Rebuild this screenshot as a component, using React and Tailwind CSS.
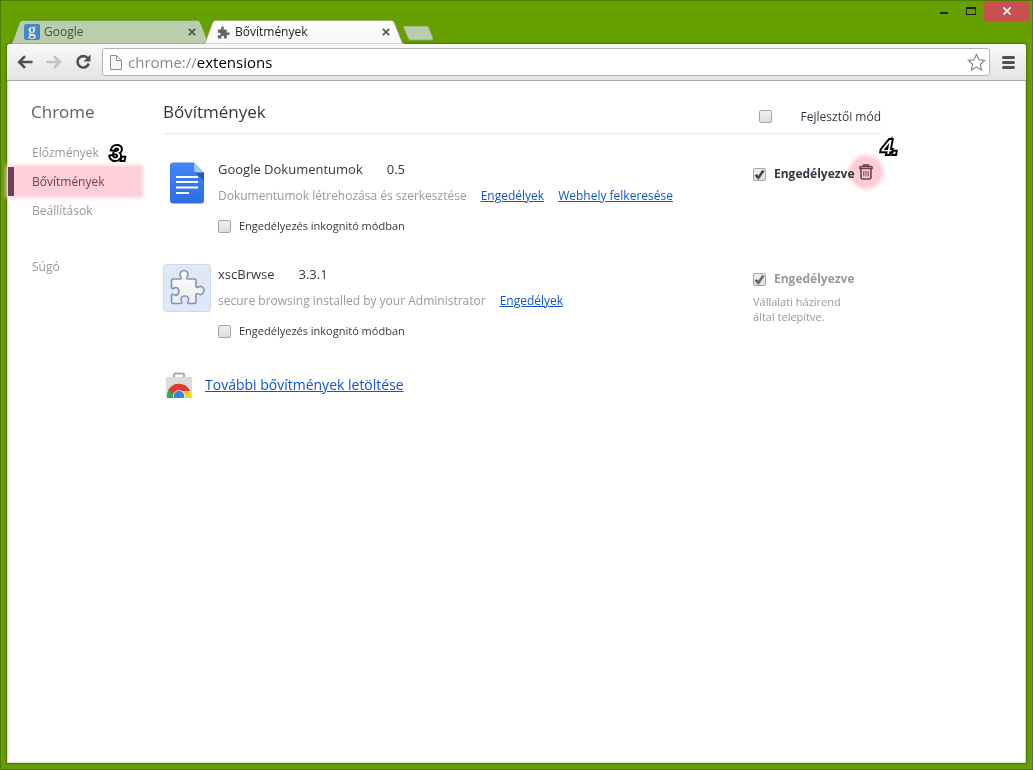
// src/App.jsx
import React, { useState } from 'react';

const PUZZLE_PATH =
  'M9 11h7c1.500 0 1.500-1 .8-2.200C15 6 16.500 2.500 20 2.500S25 6 23.200 8.800C22.500 10 22.500 11 24 11h6.500c1 0 1.500.5 1.500 1.500V18c0 1.600 1 1.700 2.200 1 2.600-1.600 5.800 0 5.800 3.500s-3.200 5-5.800 3.400c-1.200-.7-2.200-.6-2.200 1V34c0 1-.5 1.500-1.500 1.500H25c-1.500 0-1.600-1-.9-2.200 1.500-2.600 0-5.300-3.300-5.300s-4.800 2.700-3.300 5.300c.7 1.200.6 2.200-.9 2.200H9c-1 0-1.500-.5-1.500-1.500v-6.500c0-1.500 1-1.600 2.200-.9 2.600 1.500 5.300 0 5.300-3.300S12.300 18.700 9.700 20.200c-1.200.7-2.200.6-2.200-.9v-6.800C7.500 11.500 8 11 9 11z';

const SmallPuzzle = () => (
  <svg width="13" height="13" viewBox="5 1 36 36" fill="#636363">
    <path d={PUZZLE_PATH} />
  </svg>
);

const DocsIcon = () => (
  <svg width="48" height="48" viewBox="0 0 48 48" className="shrink-0">
    <defs>
      <linearGradient id="docs" x1="0" y1="0" x2="0" y2="1">
        <stop offset="0" stopColor="#4285f4" />
        <stop offset="1" stopColor="#2f6ce8" />
      </linearGradient>
    </defs>
    <path d="M10 3.500h21l10 10v28a3 3 0 0 1-3 3H10a3 3 0 0 1-3-3v-35a3 3 0 0 1 3-3z" fill="url(#docs)" />
    <path d="M32 13h9v9z" fill="#2457b8" />
    <path d="M31 3.500l10 10h-8a2 2 0 0 1-2-2z" fill="#a6c5fa" />
    <path d="M13 18h22M13 23h22M13 28.500h22M13 34h13" stroke="#fff" strokeWidth="2.200" />
  </svg>
);

const PuzzleIcon = () => (
  <svg width="48" height="48" viewBox="0 0 48 48" className="shrink-0">
    <defs>
      <linearGradient id="piece" x1="0" y1="0" x2="0" y2="1">
        <stop offset="0" stopColor="#ffffff" />
        <stop offset="1" stopColor="#e9ebef" />
      </linearGradient>
    </defs>
    <rect x="0.5" y="0.5" width="47" height="47" rx="3" fill="#dfe8f6" stroke="#cfd9ea" />
    <g transform="translate(1 4)">
      <path d={PUZZLE_PATH} fill="url(#piece)" stroke="#8593ab" strokeWidth="1.600" />
    </g>
  </svg>
);

const StoreIcon = () => (
  <svg width="26" height="27" viewBox="0 0 26 27" className="shrink-0">
    <defs>
      <clipPath id="bag">
        <rect x="0" y="5" width="26" height="21" />
      </clipPath>
    </defs>
    <path d="M8 5V3a1.500 1.500 0 0 1 1.500-1.500h7A1.500 1.500 0 0 1 18 3v2" fill="none" stroke="#a9a9a9" strokeWidth="2" />
    <rect x="0" y="5" width="26" height="21" fill="#dcdcdc" />
    <g clipPath="url(#bag)">
      <circle cx="13" cy="24" r="12" fill="#fbd30a" />
      <path d="M1 24a12 12 0 0 0 6 10l6-10-5-4-4.500-4A12 12 0 0 0 1 24z" fill="#2fa84f" />
      <path d="M2.800 17.500A12 12 0 0 1 24 19H13a5 5 0 0 0-5 5z" fill="#df3a32" />
      <circle cx="13" cy="24" r="6" fill="#e8eef6" />
      <circle cx="13" cy="24" r="5.200" fill="#3b82d8" />
    </g>
  </svg>
);

const TrashIcon = () => (
  <svg width="14" height="16" viewBox="0 0 14 16" fill="none" stroke="#6b4250">
    <path d="M4.500 2.500V1h5v1.500M.8 4.500v-1a1 1 0 0 1 1-1h10.400a1 1 0 0 1 1 1v1z" strokeWidth="1.400" />
    <path d="M2 5v8a2 2 0 0 0 2 2h6a2 2 0 0 0 2-2V5" strokeWidth="1.600" />
    <path d="M4.800 7v5.500M7 7v5.500M9.200 7v5.500" />
  </svg>
);

const CloseGlyph = () => (
  <svg width="8" height="8" viewBox="0 0 8 8" stroke="#555" strokeWidth="1.700">
    <path d="M.8.8l6.400 6.400M7.200.8L.8 7.200" />
  </svg>
);

const Checkbox = ({ id, checked, onChange, disabled }) => (
  <span className="grid size-[13px] shrink-0">
    <input
      id={id}
      type="checkbox"
      checked={checked}
      disabled={disabled}
      onChange={onChange}
      className="peer col-start-1 row-start-1 size-[13px] appearance-none rounded-[2px] border border-[#a6a6a6] bg-linear-to-b from-[#f0f0f0] to-[#dedede]"
    />
    <svg
      viewBox="0 0 13 13"
      className="pointer-events-none invisible col-start-1 row-start-1 size-[13px] peer-checked:visible"
      fill="none"
      stroke={disabled ? '#666' : '#444'}
      strokeWidth="2.600"
    >
      <path d="M2.500 6.800l2.800 2.900 5.200-7.200" />
    </svg>
  </span>
);

const Tab = ({ active, icon, title, className }) => (
  <div className={`relative h-6 ${className}`}>
    <svg className="absolute inset-0 h-full w-full" viewBox="0 0 200 24" preserveAspectRatio="none">
      <defs>
        <linearGradient id="tab" x1="0" y1="0" x2="0" y2="1">
          <stop offset="0" stopColor="#ffffff" />
          <stop offset="1" stopColor="#f7f7f7" />
        </linearGradient>
      </defs>
      <path
        d="M0 24c1.500 0 2-1 2.500-2L9 4C10 1.500 11 .5 13 .5h173c2 0 3 1 4 3.500l7 18c.5 1 1 2 3 2z"
        fill={active ? 'url(#tab)' : '#bacdad'}
        stroke={active ? '#8aa76a' : '#6f9440'}
        strokeWidth="0.7"
      />
    </svg>
    <div className="relative flex h-full items-center pr-[15px] pl-[14px]">
      <a href="#" className={`flex flex-1 items-center text-xs ${active ? 'gap-[5px] text-[#222]' : 'gap-1 text-[#44543a]'}`}>
        {icon}
        {title}
      </a>
      <button aria-label="Bezárás">
        <CloseGlyph />
      </button>
    </div>
  </div>
);

const TitleBar = () => (
  <header className="flex h-[43px] justify-between pr-[3px] pl-[9px]">
    <div className="flex items-end">
      <Tab
        title="Google"
        className="w-[201px]"
        icon={
          <span className="flex size-4 items-center justify-center rounded-[2px] bg-[#4787c6] font-['Liberation_Serif',serif] text-base leading-none font-bold text-[#dce9e8]">
            <span className="-mt-1">g</span>
          </span>
        }
      />
      <Tab active title="Bővítmények" className="-ml-2 w-[202px]" icon={<SmallPuzzle />} />
      <button aria-label="Új lap" className="mb-[3px] -ml-[3px]">
        <svg width="32" height="16" viewBox="0 0 32 16">
          <path d="M3 1h21c1.500 0 2.500.5 3 2l4 10c.5 1.500 0 2.200-1.500 2.200H9c-1.500 0-2.500-.7-3-2L1.700 3C1.200 1.700 1.500 1 3 1z" fill="#bacdad" stroke="#7d9c5a" strokeWidth="0.7" />
        </svg>
      </button>
    </div>
    <div className="flex h-5 items-stretch">
      <button aria-label="Kis méret" className="flex w-[27px] items-center justify-center">
        <span className="mt-1 h-[2px] w-2 bg-[#222]" />
      </button>
      <button aria-label="Teljes méret" className="flex w-[27px] items-center justify-center">
        <span className="h-2 w-[10px] border border-t-2 border-[#222]" />
      </button>
      <button aria-label="Bezárás" className="flex w-[45px] items-center justify-center bg-[#c75050]">
        <svg width="8" height="8" viewBox="0 0 8 8" stroke="#fff" strokeWidth="1.700">
          <path d="M.5.5l7 7M7.500.5l-7 7" />
        </svg>
      </button>
    </div>
  </header>
);

const Toolbar = () => (
  <div className="flex h-[37px] items-center rounded-t-[3px] border-b border-[#a5a5a5] bg-linear-to-b from-[#f9f9f9] to-[#e3e3e3] pr-[11px] pl-[10px]">
    <div className="flex items-center gap-[13px]">
      <button aria-label="Vissza">
        <svg width="16" height="14" viewBox="0 0 16 14" fill="none" stroke="#505050" strokeWidth="2.600">
          <path d="M15.500 7H2.500M8 1.200L2.200 7 8 12.800" />
        </svg>
      </button>
      <button aria-label="Előre">
        <svg width="16" height="14" viewBox="0 0 16 14" fill="none" stroke="#c2c2c2" strokeWidth="2.600">
          <path d="M.5 7h13M8 1.200L13.800 7 8 12.800" />
        </svg>
      </button>
      <button aria-label="Frissítés">
        <svg width="16" height="16" viewBox="0 0 16 16" fill="none" stroke="#505050" strokeWidth="2.600">
          <path d="M12.500 4A5.700 5.700 0 1 0 13.700 9.500" />
          <path d="M15.500 0.500v7h-7z" fill="#505050" stroke="none" />
        </svg>
      </button>
    </div>
    <div className="ml-[11px] flex h-7 flex-1 items-center rounded-[3px] border border-[#b4b4b4] bg-white pr-[3px] pl-[7px]">
      <svg width="12" height="15" viewBox="0 0 12 15" fill="#f6f6f6" stroke="#8e8e8e">
        <path d="M.5.5h6l5 5v9H.5zM6.500.5v5h5" />
      </svg>
      <label htmlFor="address" className="ml-[6px] text-[15px] text-[#8a8a8a]">
        chrome://
      </label>
      <input id="address" type="text" defaultValue="extensions" className="min-w-0 flex-1 bg-transparent text-[15px] text-black outline-none" />
      <button aria-label="Könyvjelző">
        <svg width="19" height="19" viewBox="0 0 19 19" fill="#fff" stroke="#8a8a8a" strokeWidth="1.200" strokeLinejoin="round">
          <path d="M9.500 1.200l2.400 5.600 6 .5-4.600 4 1.400 6-5.200-3.200-5.200 3.200 1.400-6-4.600-4 6-.5z" />
        </svg>
      </button>
    </div>
    <button aria-label="Menü" className="ml-3 flex flex-col gap-[2px]">
      <span className="h-[3px] w-[13px] rounded-full bg-[#505050]" />
      <span className="h-[3px] w-[13px] rounded-full bg-[#505050]" />
      <span className="h-[3px] w-[13px] rounded-full bg-[#505050]" />
    </button>
  </div>
);

const StepMark = ({ children, className }) => (
  <span
    className={`absolute font-['Liberation_Sans',sans-serif] text-xl leading-5 text-white italic [-webkit-text-stroke:4px_black] [paint-order:stroke_fill] ${className}`}
  >
    {children}
  </span>
);

const Sidebar = () => (
  <aside className="w-[155px] shrink-0 pt-4">
    <h1 className="pl-[23px] text-[17px] leading-[30px] text-[#5c6166]">Chrome</h1>
    <nav className="mt-[11px] text-xs leading-[29px] text-[#999]">
      <div className="relative">
        <a href="#" className="block pl-6">Előzmények</a>
        <StepMark className="top-[5px] left-[102px]">3.</StepMark>
      </div>
      <a
        href="#"
        className="mr-[22px] block border-l-[6px] border-[#6b4459] bg-[#ffd0da] pl-[18px] text-[#6b3e54] shadow-[0_0_4px_2px_#ffd0da]"
      >
        Bővítmények
      </a>
      <a href="#" className="block pl-6">Beállítások</a>
      <a href="#" className="mt-[27px] block pl-6">Súgó</a>
    </nav>
  </aside>
);

const Extension = ({ ext }) => {
  const [enabled, setEnabled] = useState(true);
  const [incognito, setIncognito] = useState(false);

  return (
    <li className="flex">
      {ext.icon}
      <div className="ml-[7px] min-w-0 flex-1">
        <h3 className="flex gap-6 text-[13px] leading-5 text-[#303942]">
          <span>{ext.name}</span>
          <span>{ext.version}</span>
        </h3>
        <p className="mt-[7px] flex gap-[14px] text-xs leading-5 text-[#999]">
          <span>{ext.description}</span>
          {ext.links.map((link) => (
            <a key={link} href="#" className="text-[#15c] underline">
              {link}
            </a>
          ))}
        </p>
        <div className="mt-[10px] flex items-center gap-2 text-[11px] leading-5 text-[#303942]">
          <Checkbox id={`${ext.id}-incognito`} checked={incognito} onChange={() => setIncognito(!incognito)} />
          <label htmlFor={`${ext.id}-incognito`}>Engedélyezés inkognitó módban</label>
        </div>
      </div>
      <div className="relative w-[128px] shrink-0 pt-[5px]">
        <div className={`flex items-center gap-2 text-xs leading-5 font-bold ${ext.managed ? 'text-[#999]' : 'text-[#303942]'}`}>
          <Checkbox
            id={`${ext.id}-enabled`}
            checked={enabled}
            disabled={ext.managed}
            onChange={() => setEnabled(!enabled)}
          />
          <label htmlFor={`${ext.id}-enabled`}>Engedélyezve</label>
        </div>
        {ext.managed ? (
          <p className="mt-[5px] w-28 text-[11px] leading-[15px] text-[#999]">Vállalati házirend által telepítve.</p>
        ) : (
          <>
            <button
              aria-label="Törlés"
              className="absolute -top-[2px] right-0 flex size-[30px] items-center justify-center rounded-full bg-[#ffccd6] mix-blend-multiply shadow-[0_0_4px_2px_#ffccd6]"
            >
              <TrashIcon />
            </button>
            <StepMark className="-top-[22px] -right-[17px]">4.</StepMark>
          </>
        )}
      </div>
    </li>
  );
};

const extensions = [
  {
    id: 'docs',
    icon: <DocsIcon />,
    name: 'Google Dokumentumok',
    version: '0.5',
    description: 'Dokumentumok létrehozása és szerkesztése',
    links: ['Engedélyek', 'Webhely felkeresése'],
    managed: false,
  },
  {
    id: 'xsc',
    icon: <PuzzleIcon />,
    name: 'xscBrwse',
    version: '3.3.1',
    description: 'secure browsing installed by your Administrator',
    links: ['Engedélyek'],
    managed: true,
  },
];

const App = () => {
  const [devMode, setDevMode] = useState(false);

  return (
    <div className="flex min-h-screen flex-col border border-[#4f7b00] bg-[#669f00] font-['Open_Sans','Noto_Sans',sans-serif]">
      <TitleBar />
      <div className="mx-[6px] mb-[6px] flex flex-1 flex-col rounded-t-[3px] bg-white shadow-[0_0_2px_1px_#4a7400]">
        <Toolbar />
        <div className="flex flex-1 border border-t-0 border-[#d9dcd6]">
          <Sidebar />
          <main className="max-w-[718px] flex-1">
            {/* Header */}
            <div className="flex h-[53px] justify-between border-b border-[#eaeaea]">
              <h2 className="pt-4 text-[17px] leading-[30px] text-[#303942]">Bővítmények</h2>
              <div className="flex w-[122px] items-center justify-between pt-[19px] text-xs text-[#303942]">
                <Checkbox id="dev-mode" checked={devMode} onChange={() => setDevMode(!devMode)} />
                <label htmlFor="dev-mode">Fejlesztői mód</label>
              </div>
            </div>

            {/* Extension list */}
            <ul className="mt-[25px] flex flex-col gap-7">
              {extensions.map((ext) => (
                <Extension key={ext.id} ext={ext} />
              ))}
            </ul>

            {/* Web store link */}
            <div className="mt-[29px] flex items-center gap-[13px] pl-[3px]">
              <StoreIcon />
              <a href="#" className="text-sm leading-[30px] text-[#15c] underline">
                További bővítmények letöltése
              </a>
            </div>
          </main>
        </div>
      </div>
    </div>
  );
};

export default App;
